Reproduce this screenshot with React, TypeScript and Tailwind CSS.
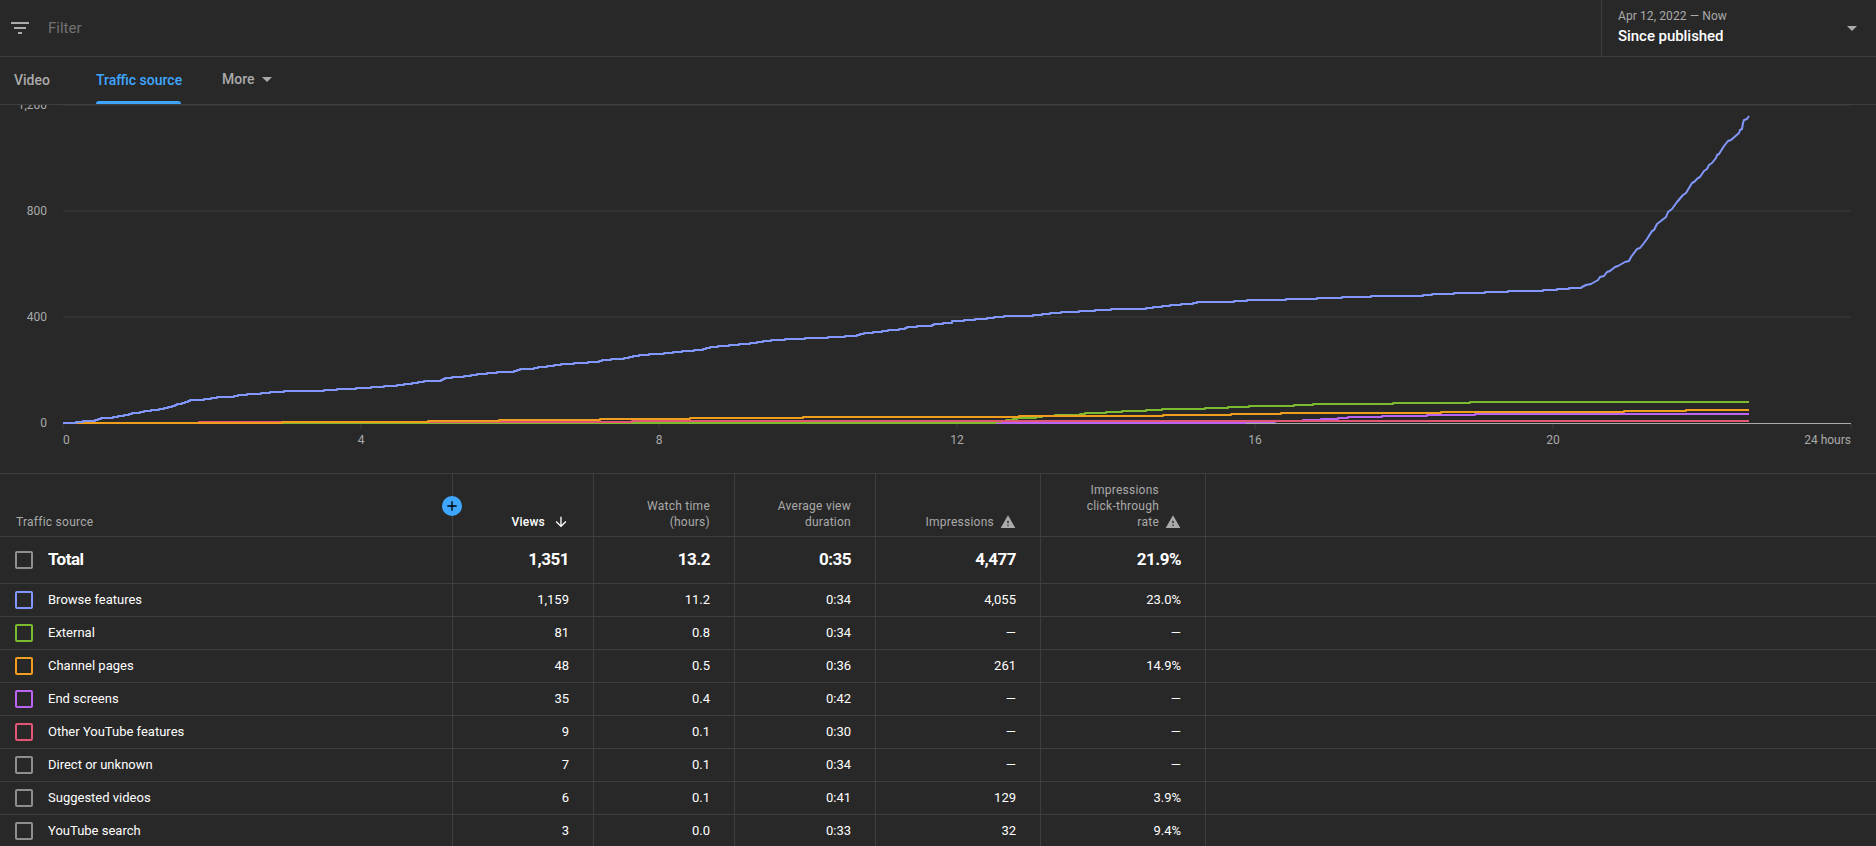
import { MdAdd, MdArrowDownward, MdArrowDropDown, MdFilterList, MdWarning } from 'react-icons/md';

type Point = [number, number];

interface Series {
  name: string;
  color: string;
  points: Point[];
}

interface SourceRow {
  name: string;
  border: string;
  values: string[];
}

const CHART_END = 1749;

// Each entry is the x where a new level starts, and the y of that level
const browseSteps: Point[] = [
  [63, 423], [76, 422], [83, 421], [95, 420], [98, 419], [101, 418], [113, 417], [118, 416],
  [124, 415], [129, 414], [132, 413], [140, 412], [144, 411], [151, 410], [159, 409], [164, 408],
  [168, 407], [172, 406], [175, 405], [177, 404], [182, 403], [185, 402], [188, 401], [190, 400],
  [204, 399], [211, 398], [217, 397], [234, 396], [238, 395], [247, 394], [261, 393], [270, 392],
  [284, 391], [324, 390], [337, 389], [356, 388], [371, 387], [384, 386], [397, 385], [404, 384],
  [412, 383], [418, 382], [424, 381], [441, 380], [443, 379], [445, 378], [452, 377], [464, 376],
  [471, 375], [477, 374], [487, 373], [497, 372], [514, 371], [517, 370], [520, 369], [534, 368],
  [538, 367], [547, 366], [554, 365], [561, 364], [574, 363], [588, 362], [599, 361], [602, 360],
  [611, 359], [624, 358], [629, 357], [633, 356], [639, 355], [649, 354], [664, 353], [673, 352],
  [682, 351], [694, 350], [703, 349], [706, 348], [710, 347], [718, 346], [729, 345], [739, 344],
  [750, 343], [757, 342], [763, 341], [771, 340], [785, 339], [805, 338], [828, 337], [845, 336],
  [857, 335], [860, 334], [864, 333], [873, 332], [882, 331], [888, 330], [899, 329], [905, 328],
  [907, 327], [917, 326], [932, 325], [934, 324], [943, 323], [952, 321], [964, 320], [975, 319],
  [987, 318], [994, 317], [1004, 316], [1033, 315], [1042, 314], [1050, 313], [1061, 312],
  [1079, 311], [1095, 310], [1111, 309], [1146, 308], [1153, 307], [1162, 306], [1170, 305],
  [1181, 304], [1193, 303], [1197, 302], [1234, 301], [1247, 300], [1286, 299], [1317, 298],
  [1342, 297], [1371, 296], [1423, 295], [1432, 294], [1454, 293], [1485, 292], [1508, 291],
  [1543, 290], [1557, 289], [1569, 288],
];

const browseClimb: Point[] = [
  [1581, 288], [1582, 287], [1586, 285], [1591, 284], [1598, 280], [1600, 277], [1604, 276],
  [1607, 272], [1610, 271], [1615, 267], [1618, 266], [1625, 262], [1629, 261], [1631, 257],
  [1637, 249], [1640, 248], [1644, 243], [1647, 239], [1652, 231], [1654, 230], [1657, 224],
  [1666, 217], [1668, 212], [1672, 209], [1677, 202], [1683, 195], [1686, 193], [1692, 183],
  [1694, 182], [1698, 178], [1700, 177], [1704, 171], [1707, 169], [1709, 165], [1712, 163],
  [1716, 158], [1717, 155], [1719, 154], [1724, 146], [1728, 141], [1731, 140], [1739, 133],
  [1740, 130], [1742, 129], [1743, 123], [1744, 120], [1747, 119], [1749, 116],
];

const externalSteps: Point[] = [
  [63, 423], [995, 422], [1001, 421], [1006, 420], [1013, 419], [1017, 418], [1036, 417],
  [1042, 416], [1055, 415], [1080, 414], [1085, 413], [1106, 412], [1122, 411], [1146, 410],
  [1162, 409], [1205, 408], [1228, 407], [1249, 406], [1294, 405], [1313, 404], [1393, 403],
  [1470, 402], [CHART_END, 402],
];

const channelSteps: Point[] = [
  [63, 423], [282, 422], [428, 421], [499, 420], [600, 419], [690, 418], [803, 417],
  [1019, 416], [1163, 415], [1231, 414], [1281, 413], [1441, 412], [1624, 411], [1686, 410],
  [CHART_END, 410],
];

const endScreenSteps: Point[] = [
  [63, 423], [1245, 422], [1275, 421], [1303, 420], [1321, 419], [1338, 418], [1348, 417],
  [1382, 416], [1427, 415], [1475, 414], [CHART_END, 414],
];

const otherSteps: Point[] = [[63, 423], [199, 422], [632, 421], [CHART_END, 421]];

// Turn level changes into the corners of a staircase
const toStairs = (steps: Point[]): Point[] =>
  steps.flatMap((step, i): Point[] => (i === 0 ? [step] : [[step[0], steps[i - 1][1]], step]));

const series: Series[] = [
  { name: 'End screens', color: '#bb63f5', points: toStairs(endScreenSteps) },
  { name: 'External', color: '#7cbb30', points: toStairs(externalSteps) },
  { name: 'Other YouTube features', color: '#e35673', points: toStairs(otherSteps) },
  { name: 'Channel pages', color: '#f19e1e', points: toStairs(channelSteps) },
  { name: 'Browse features', color: '#8297fb', points: [...toStairs(browseSteps), ...browseClimb] },
];

const yTicks = [
  { label: '1,200', y: 105 },
  { label: '800', y: 211 },
  { label: '400', y: 317 },
  { label: '0', y: 423 },
];

const xTicks = [
  { label: '0', x: 63, anchor: 'start' as const },
  { label: '4', x: 361, anchor: 'middle' as const },
  { label: '8', x: 659, anchor: 'middle' as const },
  { label: '12', x: 957, anchor: 'middle' as const },
  { label: '16', x: 1255, anchor: 'middle' as const },
  { label: '20', x: 1553, anchor: 'middle' as const },
  { label: '24 hours', x: 1851, anchor: 'end' as const },
];

const totals = ['1,351', '13.2', '0:35', '4,477', '21.9%'];

const rows: SourceRow[] = [
  { name: 'Browse features', border: 'border-[#8297fb]', values: ['1,159', '11.2', '0:34', '4,055', '23.0%'] },
  { name: 'External', border: 'border-[#7cbb30]', values: ['81', '0.8', '0:34', '—', '—'] },
  { name: 'Channel pages', border: 'border-[#f19e1e]', values: ['48', '0.5', '0:36', '261', '14.9%'] },
  { name: 'End screens', border: 'border-[#bb63f5]', values: ['35', '0.4', '0:42', '—', '—'] },
  { name: 'Other YouTube features', border: 'border-[#e35673]', values: ['9', '0.1', '0:30', '—', '—'] },
  { name: 'Direct or unknown', border: 'border-[#8e8e8e]', values: ['7', '0.1', '0:34', '—', '—'] },
  { name: 'Suggested videos', border: 'border-[#8e8e8e]', values: ['6', '0.1', '0:41', '129', '3.9%'] },
  { name: 'YouTube search', border: 'border-[#8e8e8e]', values: ['3', '0.0', '0:33', '32', '9.4%'] },
];

const gridCols = 'grid grid-cols-[453px_141px_141px_141px_165px_165px_1fr] border-b border-[#3e3e3e]';
const cell = 'flex justify-end border-r border-[#3e3e3e] pr-6';

const Chart = () => (
  <svg className="block shrink-0" width="1876" height="368" viewBox="0 105 1876 368">
    <g shapeRendering="crispEdges">
      {yTicks.slice(0, 3).map((tick) => (
        <rect key={tick.label} x="63" y={tick.y - 1} width="1788" height="2" fill="#323232" />
      ))}
      {xTicks.map((tick) => (
        <rect key={tick.label} x={tick.x - 1} y="424" width="2" height="5" fill="#323232" />
      ))}
      <rect x="63" y="423" width="1788" height="1" fill="#aaaaaa" />
    </g>
    {series.map((s) => (
      <polyline
        key={s.name}
        points={s.points.map((p) => p.join(',')).join(' ')}
        fill="none"
        stroke={s.color}
        strokeWidth="2"
        strokeLinejoin="round"
      />
    ))}
    <g fill="#aaaaaa" fontSize="12">
      {yTicks.map((tick) => (
        <text key={tick.label} x="47" y={tick.y + 4} textAnchor="end">
          {tick.label}
        </text>
      ))}
      {xTicks.map((tick) => (
        <text key={tick.label} x={tick.x} y="444" textAnchor={tick.anchor}>
          {tick.label}
        </text>
      ))}
    </g>
  </svg>
);

const Checkbox = ({ border }: { border: string }) => (
  <span className={`size-[18px] shrink-0 rounded-xs border-2 ${border}`} />
);

export default function App() {
  return (
    <div className="flex h-[846px] w-[1876px] flex-col overflow-hidden bg-[#282828] font-[Roboto,sans-serif] text-white">
      {/* Filter bar */}
      <header className="flex h-[57px] shrink-0 border-b border-[#3e3e3e]">
        <div className="flex flex-1 items-start gap-4 pt-4 pl-2">
          <MdFilterList className="size-6 text-[#aaaaaa]" />
          <span className="text-[15px] leading-6 text-[#717171]">Filter</span>
        </div>
        <div className="flex w-[275px] items-start justify-between border-l border-[#3e3e3e] pr-3 pl-4">
          <div className="pt-2">
            <p className="text-xs leading-4 tracking-[0.1px] text-[#aaaaaa]">Apr 12, 2022 — Now</p>
            <p className="text-[15px] leading-6 font-medium tracking-[-0.05px]">Since published</p>
          </div>
          <MdArrowDropDown className="mt-4 size-6 text-[#aaaaaa]" />
        </div>
      </header>

      {/* Tabs */}
      <nav className="flex h-12 shrink-0 border-b border-[#3e3e3e] pl-[14px] text-sm leading-6 font-medium text-[#aaaaaa]">
        <span className="w-[82px] pt-[11px]">Video</span>
        <div className="flex w-[85px] flex-col justify-between whitespace-nowrap text-[#3ea6ff]">
          <span className="pt-[11px]">Traffic source</span>
          <span className="h-[3px] rounded-t-sm bg-[#3ea6ff]" />
        </div>
        <div className="ml-[41px] flex pt-[10px]">
          <span>More</span>
          <MdArrowDropDown className="size-6" />
        </div>
      </nav>

      <Chart />

      {/* Breakdown table */}
      <div className="shrink-0 border-t border-[#3e3e3e] text-[13px]">
        <div className={`${gridCols} h-[63px] text-xs leading-4 tracking-[0.25px] text-[#aaaaaa]`}>
          <div className="relative flex items-end border-r border-[#3e3e3e] pb-[6px] pl-4">
            <span>Traffic source</span>
            <span className="absolute top-[22px] -right-[10px] z-10 flex size-5 items-center justify-center rounded-full bg-[#3ea6ff]">
              <MdAdd className="size-4 text-black" />
            </span>
          </div>
          <div className={`${cell} items-end gap-2 pb-[6px] font-medium text-white`}>
            <span>Views</span>
            <MdArrowDownward className="size-4" />
          </div>
          <div className={`${cell} items-end pb-[6px] text-right`}>
            <span>
              Watch time
              <br />
              (hours)
            </span>
          </div>
          <div className={`${cell} items-end pb-[6px] text-right`}>
            <span>
              Average view
              <br />
              duration
            </span>
          </div>
          <div className={`${cell} items-end gap-[6px] pb-[6px]`}>
            <span>Impressions</span>
            <MdWarning className="size-4" />
          </div>
          <div className={`${cell} items-end gap-[6px] pb-[6px] text-right`}>
            <span>
              Impressions
              <br />
              click-through
              <br />
              rate
            </span>
            <MdWarning className="size-4" />
          </div>
        </div>

        <div className={`${gridCols} h-[47px] text-[17px] font-bold tracking-[-0.5px]`}>
          <div className="flex items-center gap-[15px] border-r border-[#3e3e3e] pl-[15px]">
            <Checkbox border="border-[#8e8e8e]" />
            <span>Total</span>
          </div>
          {totals.map((value) => (
            <div key={value} className={`${cell} items-center`}>
              {value}
            </div>
          ))}
        </div>

        {rows.map((row) => (
          <div key={row.name} className={`${gridCols} h-[33px]`}>
            <div className="flex items-center gap-[15px] border-r border-[#3e3e3e] pl-[15px]">
              <Checkbox border={row.border} />
              <span>{row.name}</span>
            </div>
            {row.values.map((value, i) => (
              <div key={i} className={`${cell} items-center`}>
                {value}
              </div>
            ))}
          </div>
        ))}
      </div>
    </div>
  );
}
